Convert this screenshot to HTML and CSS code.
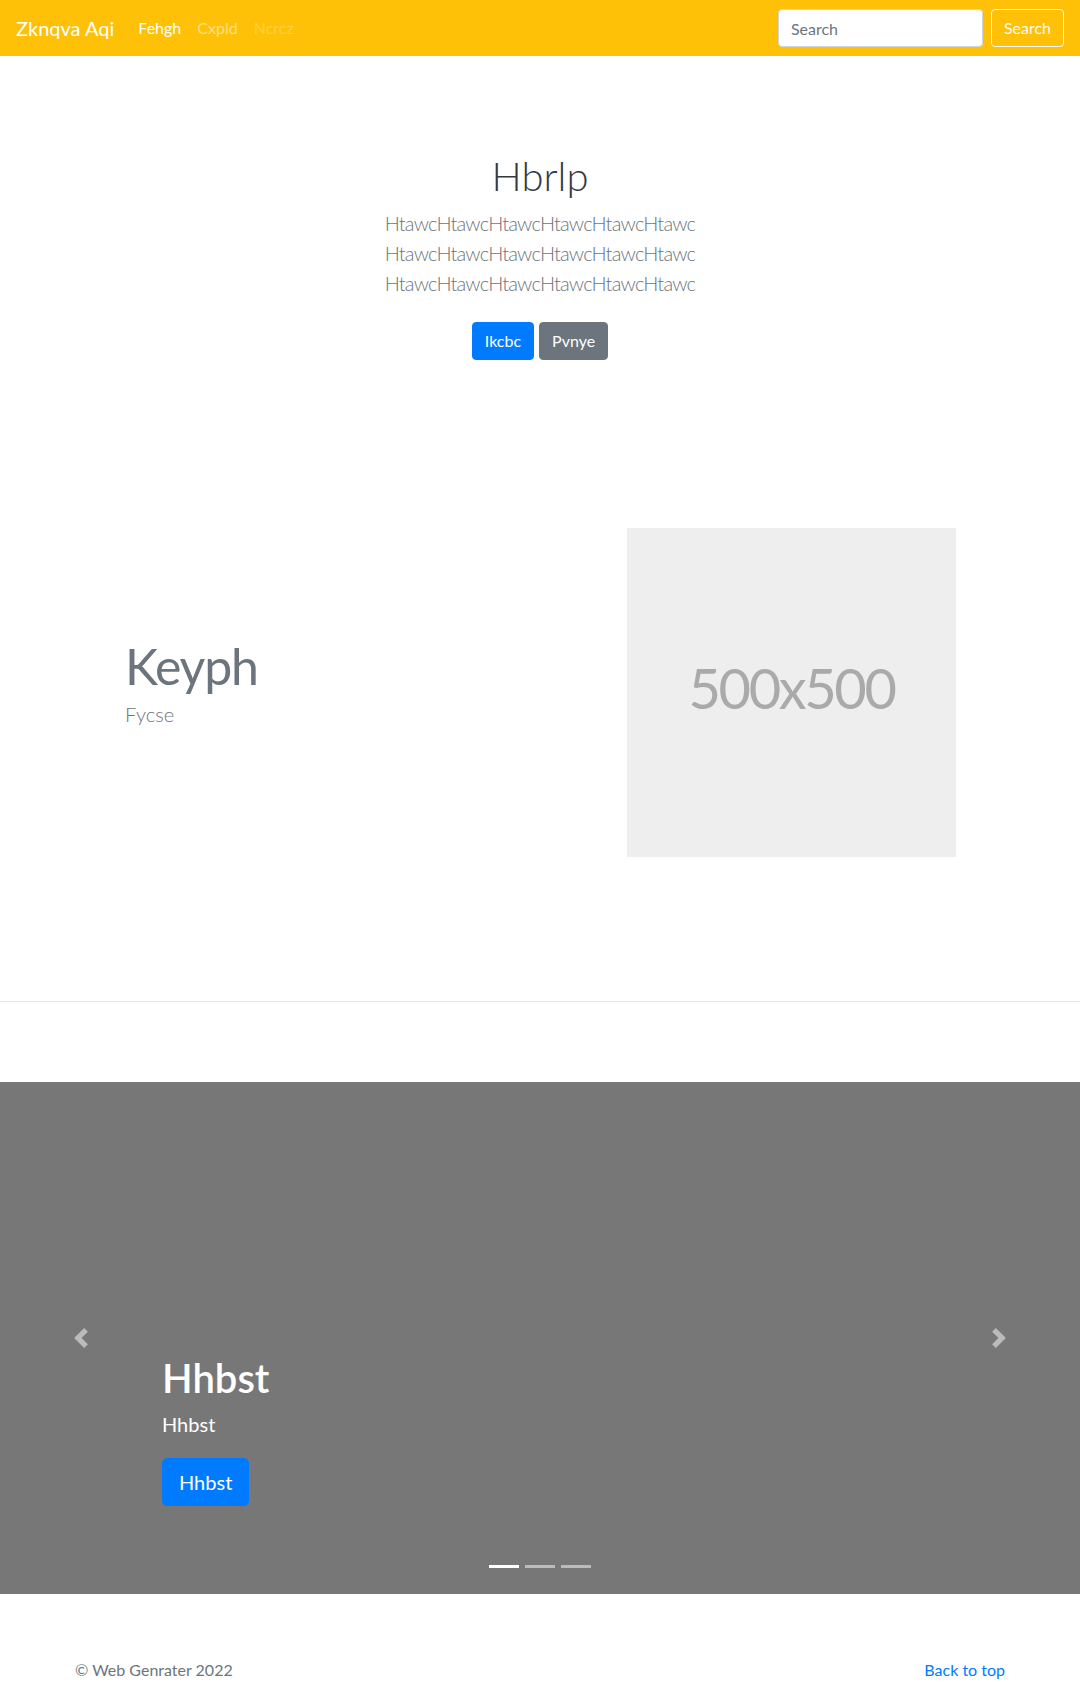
FILE: index.html
```html
<!DOCTYPE html>
<html lang="en">
<head>
<meta charset="utf-8">
<title>Zknqva Aqi</title>
<link rel="stylesheet" href="styles.css">
</head>
<body>
<nav class="navbar">
  <a class="brand" href="#">Zknqva Aqi</a>
  <ul class="nav">
    <li><a class="nav-link active" href="#">Fehgh</a></li>
    <li><a class="nav-link" href="#">Cxpld</a></li>
    <li><a class="nav-link disabled" href="#">Ncrcz</a></li>
  </ul>
  <form class="search">
    <input class="search-input" type="text" placeholder="Search">
    <button class="btn-outline" type="button">Search</button>
  </form>
</nav>

<section class="hero">
  <h1 class="hero-title">Hbrlp</h1>
  <p class="lead hero-lead">HtawcHtawcHtawcHtawcHtawcHtawc<br>HtawcHtawcHtawcHtawcHtawcHtawc<br>HtawcHtawcHtawcHtawcHtawcHtawc</p>
  <div class="hero-actions">
    <a class="btn btn-primary" href="#">Ikcbc</a>
    <a class="btn btn-secondary" href="#">Pvnye</a>
  </div>
</section>

<section class="feature">
  <div class="feature-text">
    <h2 class="feature-heading">Keyph</h2>
    <p class="lead feature-lead">Fycse</p>
  </div>
  <svg class="placeholder" width="329" height="329" viewBox="0 0 329 329" role="img" aria-label="500x500">
    <rect width="100%" height="100%" fill="#eee"></rect>
    <text x="50%" y="50%" dy=".3em" text-anchor="middle" fill="#aaa" class="placeholder-text">500x500</text>
  </svg>
</section>

<hr class="divider">

<div class="carousel">
  <div class="carousel-caption">
    <h1 class="caption-title">Hhbst</h1>
    <p class="caption-text">Hhbst</p>
    <div class="caption-action"><a class="btn btn-lg btn-primary" href="#">Hhbst</a></div>
  </div>
  <a class="carousel-control prev" href="#">
    <svg width="20" height="20" viewBox="0 0 8 8"><path fill="#fff" d="M5.25 0l-4 4 4 4 1.5-1.5L4.25 4l2.5-2.5L5.25 0z"/></svg>
  </a>
  <a class="carousel-control next" href="#">
    <svg width="20" height="20" viewBox="0 0 8 8"><path fill="#fff" d="M2.75 0l-1.5 1.5L3.75 4l-2.5 2.5L2.75 8l4-4-4-4z"/></svg>
  </a>
  <ol class="indicators">
    <li class="active"></li>
    <li></li>
    <li></li>
  </ol>
</div>

<footer class="footer">
  <p class="copy">© Web Genrater 2022</p>
  <p class="back"><a href="#">Back to top</a></p>
</footer>
</body>
</html>
```
FILE: styles.css
```css
* { box-sizing: border-box; }
html, body { margin: 0; padding: 0; }
body {
  font-family: Lato, "Open Sans", "Noto Sans", sans-serif;
  font-size: 16px;
  line-height: 1.5;
  color: #212529;
  background: #fff;
}
a { text-decoration: none; }
p { margin: 0; }

/* navbar */
.navbar {
  display: flex;
  align-items: center;
  height: 56px;
  padding: 8px 16px;
  background: #ffc107;
}
.brand {
  font-size: 20px;
  line-height: 30px;
  padding: 5px 0;
  margin-right: 16px;
  color: #fff;
}
.nav {
  display: flex;
  list-style: none;
  margin: 0 auto 0 0;
  padding: 0;
}
.nav-link {
  display: block;
  padding: 8px;
  line-height: 24px;
  color: rgba(255,255,255,.5);
}
.nav-link.active { color: #fff; }
.nav-link.disabled { color: rgba(255,255,255,.25); }
.search { display: flex; align-items: center; margin: 0; }
.search-input {
  width: 205px;
  height: 38px;
  padding: 6px 12px;
  margin-right: 8px;
  font: inherit;
  font-size: 16px;
  color: #495057;
  background: #fff;
  border: 1px solid #ced4da;
  border-radius: 4px;
}
.search-input::placeholder { color: #6c757d; }
.btn-outline {
  height: 38px;
  padding: 6px 12px;
  font: inherit;
  font-size: 16px;
  color: #f8f9fa;
  background: transparent;
  border: 1px solid #f8f9fa;
  border-radius: 4px;
}

/* buttons */
.btn {
  display: inline-block;
  padding: 6px 12px;
  font-size: 16px;
  line-height: 24px;
  border: 1px solid transparent;
  border-radius: 4px;
  color: #fff;
}
.btn-primary { background: #007bff; border-color: #007bff; }
.btn-secondary { background: #6c757d; border-color: #6c757d; }
.btn-lg { padding: 8px 16px; font-size: 20px; line-height: 30px; border-radius: 5px; }

/* hero */
.hero {
  padding: 96px 15px;
  text-align: center;
}
.hero-title {
  margin: 0 0 8px;
  font-size: 40px;
  font-weight: 300;
  line-height: 48px;
  color: #343a40;
}
.lead { font-size: 20px; font-weight: 300; line-height: 30px; }
.hero-lead { color: #6c757d; margin-bottom: 16px; letter-spacing: -0.8px; }
.hero-actions {
  display: flex;
  justify-content: center;
  gap: 5px;
  padding: 8px 0;
}

/* feature */
.feature {
  display: flex;
  align-items: center;
  justify-content: space-between;
  max-width: 930px;
  margin: 0 auto;
  padding: 64px 0;
}
.feature-text { padding-left: 50px; }
.feature-heading {
  margin: 0 0 8px;
  font-size: 50px;
  font-weight: 400;
  line-height: 1;
  letter-spacing: -1.2px;
  color: #6c757d;
}
.feature-lead { color: #6c757d; margin-bottom: 16px; }
.placeholder { display: block; margin-right: 49px; }
.placeholder-text { font-size: 56px; letter-spacing: -2.4px; font-family: Lato, "Open Sans", sans-serif; }

.divider {
  margin: 80px 0;
  border: 0;
  border-top: 1px solid rgba(0,0,0,.1);
  height: 0;
}

/* carousel */
.carousel {
  position: relative;
  height: 512px;
  margin-bottom: 64px;
  background: #777;
}
.carousel-caption {
  position: absolute;
  left: 15%;
  right: 15%;
  bottom: 48px;
  padding: 20px 0;
  color: #fff;
  z-index: 10;
}
.caption-title {
  margin: 0 0 8px;
  font-size: 40px;
  font-weight: 600;
  line-height: 48px;
}
.caption-text { margin-bottom: 20px; font-size: 20px; line-height: 28px; }
.caption-action { margin-bottom: 20px; }
.carousel-control {
  position: absolute;
  top: 0;
  bottom: 0;
  width: 15%;
  display: flex;
  align-items: center;
  justify-content: center;
  opacity: .5;
}
.carousel-control.prev { left: 0; }
.carousel-control.next { right: 0; }
.carousel-control svg { display: block; }
.indicators {
  position: absolute;
  left: 15%;
  right: 15%;
  bottom: 0;
  display: flex;
  justify-content: center;
  margin: 0 0 16px;
  padding: 0;
  list-style: none;
  z-index: 15;
}
.indicators li {
  box-sizing: content-box;
  width: 30px;
  height: 3px;
  margin: 0 3px;
  background: #fff;
  background-clip: padding-box;
  border-top: 10px solid transparent;
  border-bottom: 10px solid transparent;
  opacity: .5;
}
.indicators li.active { opacity: 1; }

/* footer */
.footer {
  display: flex;
  justify-content: space-between;
  max-width: 930px;
  margin: 0 auto;
}
.footer p { margin-bottom: 4px; }
.copy { color: #6c757d; }
.back a { color: #007bff; }
```
